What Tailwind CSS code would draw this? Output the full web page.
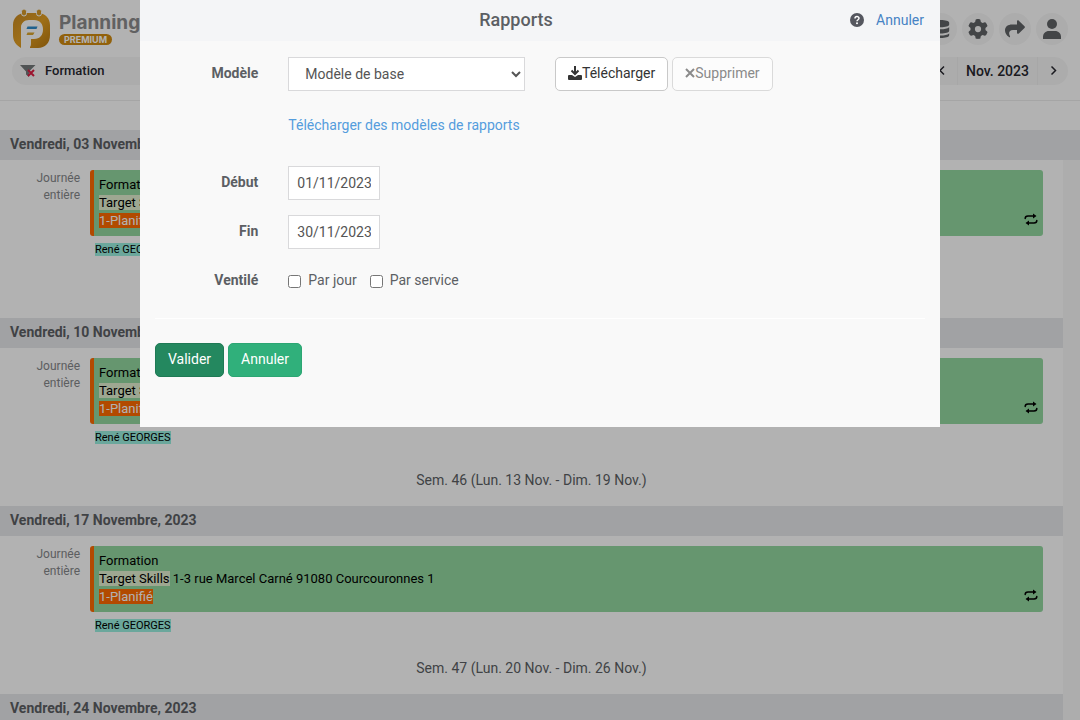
<!DOCTYPE html>
<html lang="fr">
<head>
<meta charset="utf-8">
<meta name="viewport" content="width=device-width, initial-scale=1">
<title>Planning – Rapports</title>
<script src="https://cdn.jsdelivr.net/npm/@tailwindcss/browser@4"></script>
</head>
<body class="h-screen overflow-hidden bg-white font-[Roboto,'Liberation_Sans',sans-serif] text-sm text-[#5c5f64]">

<svg class="hidden" aria-hidden="true">
  <symbol id="repeat" viewBox="0 0 14 13">
    <path d="M1.200 5.500C1.200 3.500 2.500 3 4 3h6M12.800 7.500c0 2-1.300 2.500-2.800 2.500H4" fill="none" stroke="currentColor" stroke-width="1.500" stroke-linecap="round"/>
    <path d="M9 .5L12.500 3 9 5.500zM5 7.500L1.500 10 5 12.500z" fill="currentColor"/>
  </symbol>
</svg>

<div class="flex h-full flex-col">
  <header class="h-[101px] shrink-0 border-b border-[#ececec] pl-3 pr-3">
    <div class="flex h-[57px] items-center justify-between">
      <div class="flex items-center gap-2">
        <svg class="h-10 w-[39px]" viewBox="0 0 39 40" role="img" aria-label="Logo Planning">
          <defs><linearGradient id="gold" x1="0" y1="0" x2="1" y2="1"><stop offset="0" stop-color="#c98a22"/><stop offset=".5" stop-color="#e3a024"/><stop offset="1" stop-color="#b97a10"/></linearGradient></defs>
          <path d="M9 39C4 36 1 32 1 26V16C1 9 6 4 13 4h13c7 0 12 5 12 12v10c0 8-5 13-12 13h-8V29h5c6 0 7-4 7-8 0-5-3-8-8-8H15c-4 0-6 2-6 6z" fill="url(#gold)"/>
          <path d="M9 39V20c0-6 3-9 8-9h5c6 0 9 4 9 9.500S28 30 22 30h-3v5c0 3-2 4-4 4z" fill="#fff"/>
          <rect x="9.500" y="0" width="5" height="7" rx="2.500" fill="#d69a2a" stroke="#fff"/><rect x="24.500" y="0" width="5" height="7" rx="2.500" fill="#d69a2a" stroke="#fff"/>
          <path d="M15.500 17.500h10l-1 2.500H14.500z" fill="#2d8ccc"/><path d="M15.500 23.500h7L21 26h-6.500z" fill="#dca52d"/>
        </svg>
        <div class="flex flex-col items-start">
          <span class="font-[Inter,sans-serif] text-[19px] leading-[22px] font-bold text-[#8b8b8d]">Planning</span>
          <span class="rounded-full bg-[#d28c10] px-[5px] font-[Inter,sans-serif] text-[9px] leading-[11px] font-bold text-white">PREMIUM</span>
        </div>
      </div>
      <nav class="flex gap-[5px] text-[#606366]" aria-label="Outils">
        <button class="flex size-8 items-center justify-center rounded-full bg-[#f7f7f7]" aria-label="Données">
          <svg class="size-5" viewBox="0 0 22 22" fill="currentColor"><path d="M2 4c0-4 18-4 18 0v2c0 4-18 4-18 0zM2 9c4 3 14 3 18 0v4c0 4-18 4-18 0zM2 16c4 3 14 3 18 0v2c0 4-18 4-18 0z"/></svg>
        </button>
        <button class="flex size-8 items-center justify-center rounded-full bg-[#f7f7f7]" aria-label="Paramètres">
          <svg class="size-5" viewBox="0 0 512 512" fill="currentColor"><path d="M495.900 166.600c3.200 8.700.5 18.400-6.400 24.600l-43.300 39.400c1.100 8.300 1.700 16.800 1.700 25.400s-.6 17.100-1.700 25.400l43.300 39.400c6.900 6.200 9.600 15.900 6.400 24.600-4.400 11.900-9.700 23.300-15.800 34.300l-4.700 8.100c-6.600 11-14 21.400-22.100 31.200-5.900 7.200-15.700 9.600-24.500 6.800l-55.700-17.700c-13.400 10.300-28.200 18.900-44 25.400l-12.500 57.100c-2 9.100-9 16.300-18.200 17.800-13.800 2.300-28 3.500-42.500 3.500s-28.700-1.200-42.500-3.500c-9.200-1.500-16.200-8.700-18.200-17.800l-12.500-57.100c-15.800-6.500-30.600-15.100-44-25.400L83.100 425.900c-8.800 2.800-18.600.3-24.500-6.800-8.100-9.800-15.500-20.200-22.100-31.200l-4.700-8.100c-6.100-11-11.400-22.400-15.800-34.300-3.200-8.700-.5-18.400 6.400-24.600l43.300-39.400C64.600 273.100 64 264.600 64 256s.6-17.100 1.700-25.400L22.400 191.200c-6.900-6.200-9.600-15.900-6.400-24.600 4.400-11.900 9.700-23.300 15.800-34.300l4.700-8.100c6.600-11 14-21.400 22.100-31.200 5.900-7.200 15.700-9.600 24.500-6.800l55.700 17.700c13.400-10.300 28.200-18.900 44-25.400l12.500-57.100c2-9.100 9-16.300 18.200-17.800C227.300 1.200 241.500 0 256 0s28.700 1.200 42.500 3.500c9.200 1.500 16.200 8.700 18.200 17.800l12.500 57.100c15.800 6.500 30.600 15.100 44 25.400l55.700-17.700c8.800-2.800 18.600-.3 24.500 6.800 8.100 9.800 15.500 20.200 22.100 31.200l4.700 8.100c6.100 11 11.400 22.400 15.700 34.400zM256 336a80 80 0 1 0 0-160 80 80 0 1 0 0 160z"/></svg>
        </button>
        <button class="flex size-8 items-center justify-center rounded-full bg-[#f7f7f7]" aria-label="Partager">
          <svg class="size-5" viewBox="0 0 20 20" fill="currentColor"><path d="M12 2.500c0-1 1-1.500 1.800-.8l5.700 5.500c.6.500.6 1.300 0 1.800l-5.700 5.500c-.8.700-1.800.2-1.800-.8V11H8c-4 0-4.700 3-3 6.300.3.800-.4 1.300-1 .8C1.500 16.300 0 14 0 11.500 0 7.500 3 5.500 7 5.500h5z"/></svg>
        </button>
        <button class="flex size-8 items-center justify-center rounded-full bg-[#f7f7f7]" aria-label="Profil">
          <svg class="size-5" viewBox="0 0 20 20" fill="currentColor"><circle cx="10" cy="5" r="5"/><path d="M1 20v-2c0-3.500 2.500-6 6-6h6c3.500 0 6 2.500 6 6v2z"/></svg>
        </button>
      </nav>
    </div>
    <div class="flex h-7 justify-between text-[#27272f]">
      <button class="flex w-72 items-center gap-2 rounded-full bg-[#f7f7f7] pl-2 text-[13px] font-medium">
        <svg class="h-4 w-[17px]" viewBox="0 0 17 16"><path d="M0 2h15.500L9 8.500V14l-3-2.500v-3z" fill="#74797a"/><path d="M8 7l6 6M14 7l-6 6" stroke="#df1d43" stroke-width="2"/></svg>
        Formation
      </button>
      <div class="flex items-stretch rounded-full bg-[#f7f7f7]">
        <button class="flex w-8 items-center justify-center" aria-label="Mois précédent"><svg class="size-3" viewBox="0 0 12 12" fill="none" stroke="currentColor" stroke-width="1.500"><path d="M9 1.500L5 5.500l4 4"/></svg></button>
        <button class="border-x border-[#efefef] px-2 text-sm font-medium">Nov. 2023</button>
        <button class="flex w-[30px] items-center justify-center" aria-label="Mois suivant"><svg class="size-3" viewBox="0 0 12 12" fill="none" stroke="currentColor" stroke-width="1.500"><path d="M4.500 1.500l4 4-4 4"/></svg></button>
      </div>
    </div>
  </header>

  <main class="mt-[29px] flex min-h-0 flex-1 flex-col">
    <h2 class="h-[30px] shrink-0 bg-[#e7e8eb] px-[10px] leading-7 font-bold">Vendredi, 03 Novembre, 2023</h2>
    <div class="flex min-h-0 flex-1">
      <div class="min-w-0 flex-1 overflow-hidden">
        <section class="h-[158px] pt-[10px]">
          <div class="flex pr-5">
            <div class="w-20 text-right text-xs leading-[17px] text-[#85878a]">Journée<br>entière</div>
            <div class="ml-[10px] min-w-0 flex-1">
              <article class="flex h-[66px] items-end justify-between rounded-[3px] border-l-4 border-[#ff6a00] bg-[#92d79f] pr-[5px] pb-[6px] pl-[5px] text-[13px] leading-[18px] text-black">
                <div><p>Formation</p><p><span class="bg-[#e2f0d0]">Target Skills</span> 1-3 rue Marcel Carné 91080 Courcouronnes 1</p><p><span class="bg-[#ff6a00] text-white">1-Planifié</span></p></div>
                <svg class="mb-1 h-[13px] w-[14px]"><use href="#repeat"/></svg>
              </article>
              <p class="mt-[5px] pl-[5px] text-[11px] leading-[18px] text-black"><span class="bg-[#9af0e0]">René GEORGES</span></p>
            </div>
          </div>
        </section>
        <h2 class="h-[30px] bg-[#e7e8eb] px-[10px] leading-7 font-bold">Vendredi, 10 Novembre, 2023</h2>
        <section class="h-[158px] pt-[10px]">
          <div class="flex pr-5">
            <div class="w-20 text-right text-xs leading-[17px] text-[#85878a]">Journée<br>entière</div>
            <div class="ml-[10px] min-w-0 flex-1">
              <article class="flex h-[66px] items-end justify-between rounded-[3px] border-l-4 border-[#ff6a00] bg-[#92d79f] pr-[5px] pb-[6px] pl-[5px] text-[13px] leading-[18px] text-black">
                <div><p>Formation</p><p><span class="bg-[#e2f0d0]">Target Skills</span> 1-3 rue Marcel Carné 91080 Courcouronnes 1</p><p><span class="bg-[#ff6a00] text-white">1-Planifié</span></p></div>
                <svg class="mb-1 h-[13px] w-[14px]"><use href="#repeat"/></svg>
              </article>
              <p class="mt-[5px] pl-[5px] text-[11px] leading-[18px] text-black"><span class="bg-[#9af0e0]">René GEORGES</span></p>
            </div>
          </div>
          <p class="mt-6 text-center leading-[18px]">Sem. 46 (Lun. 13 Nov. - Dim. 19 Nov.)</p>
        </section>
        <h2 class="h-[30px] bg-[#e7e8eb] px-[10px] leading-7 font-bold">Vendredi, 17 Novembre, 2023</h2>
        <section class="h-[158px] pt-[10px]">
          <div class="flex pr-5">
            <div class="w-20 text-right text-xs leading-[17px] text-[#85878a]">Journée<br>entière</div>
            <div class="ml-[10px] min-w-0 flex-1">
              <article class="flex h-[66px] items-end justify-between rounded-[3px] border-l-4 border-[#ff6a00] bg-[#92d79f] pr-[5px] pb-[6px] pl-[5px] text-[13px] leading-[18px] text-black">
                <div><p>Formation</p><p><span class="bg-[#e2f0d0]">Target Skills</span> 1-3 rue Marcel Carné 91080 Courcouronnes 1</p><p><span class="bg-[#ff6a00] text-white">1-Planifié</span></p></div>
                <svg class="mb-1 h-[13px] w-[14px]"><use href="#repeat"/></svg>
              </article>
              <p class="mt-[5px] pl-[5px] text-[11px] leading-[18px] text-black"><span class="bg-[#9af0e0]">René GEORGES</span></p>
            </div>
          </div>
          <p class="mt-6 text-center leading-[18px]">Sem. 47 (Lun. 20 Nov. - Dim. 26 Nov.)</p>
        </section>
        <h2 class="h-[30px] bg-[#e7e8eb] px-[10px] leading-7 font-bold">Vendredi, 24 Novembre, 2023</h2>
      </div>
      <div class="w-[17px] shrink-0 bg-[#f8f8f8]"></div>
    </div>
  </main>
</div>

<div class="fixed inset-0 bg-black/30">
  <div role="dialog" aria-modal="true" aria-labelledby="dialog-title" class="mx-auto w-full max-w-[800px] bg-[#f9f9f9] pb-[50px]">
    <div class="grid h-[41px] grid-cols-[1fr_auto_1fr] items-center bg-[#f4f5f7] px-4 pb-[2px]">
      <span></span>
      <h1 id="dialog-title" class="pr-12 text-lg leading-6 font-medium">Rapports</h1>
      <div class="flex items-center justify-end gap-3">
        <button aria-label="Aide"><svg class="size-[14px]" viewBox="0 0 14 14"><circle cx="7" cy="7" r="7" fill="#55575f"/><path d="M5 5.400C5 3 9 3 9 5.300 9 6.800 7 6.700 7 8.300" fill="none" stroke="#fff" stroke-width="1.500"/><circle cx="7" cy="10.300" r="1" fill="#fff"/></svg></button>
        <a href="#" class="text-[#4683c4]">Annuler</a>
      </div>
    </div>
    <form class="pt-4">
      <div class="grid grid-cols-12">
        <label for="modele" class="col-span-2 px-[15px] text-right leading-8 font-bold">Modèle</label>
        <div class="col-span-4 px-[15px]">
          <select id="modele" class="h-[34px] w-full border border-[#d9d9db] bg-white px-3 text-[#555]"><option>Modèle de base</option></select>
        </div>
        <div class="col-span-6 flex gap-1 px-[15px]">
          <button type="button" class="flex h-[34px] items-center rounded-[5px] border border-[#c9c9c9] bg-white px-3 pb-[2px] text-[#333]"><svg class="size-[14px]" viewBox="0 0 14 14"><path d="M7 0v7M3.500 4.500L7 8l3.500-3.500" fill="none" stroke="currentColor" stroke-width="2"/><path d="M1 9h3l3 2 3-2h3q1 0 1 1v3q0 1-1 1H1q-1 0-1-1v-3q0-1 1-1z" fill="currentColor"/></svg>Télécharger</button>
          <button type="button" disabled class="flex h-[34px] items-center rounded-[5px] border border-[#dadada] bg-[#fcfcfc] px-3 pb-[2px] text-[#8a8a8a]"><svg class="size-[10px]" viewBox="0 0 10 10" fill="none" stroke="currentColor" stroke-width="2"><path d="M1 1l8 8M9 1L1 9"/></svg>Supprimer</button>
        </div>
      </div>
      <div class="grid grid-cols-12 py-[25px]">
        <div class="col-span-10 col-start-3 px-[15px] leading-[18px]"><a href="#" class="text-[#559ddd]">Télécharger des modèles de rapports</a></div>
      </div>
      <div class="mt-[7px] grid grid-cols-12">
        <label for="debut" class="col-span-2 px-[15px] text-right leading-8 font-bold">Début</label>
        <div class="col-span-4 px-[15px]"><input id="debut" type="text" value="01/11/2023" class="h-[34px] w-[92px] border border-[#d9d9db] bg-white px-2 text-[#555]"></div>
      </div>
      <div class="mt-[15px] grid grid-cols-12">
        <label for="fin" class="col-span-2 px-[15px] text-right leading-8 font-bold">Fin</label>
        <div class="col-span-4 px-[15px]"><input id="fin" type="text" value="30/11/2023" class="h-[34px] w-[92px] border border-[#d9d9db] bg-white px-2 text-[#555]"></div>
      </div>
      <fieldset class="mt-[15px] grid grid-cols-12" aria-labelledby="ventile">
        <span id="ventile" class="col-span-2 px-[15px] text-right leading-8 font-bold">Ventilé</span>
        <div class="col-span-10 flex gap-[13px] px-[15px] leading-8">
          <label class="flex items-center gap-[7px]"><input type="checkbox" class="mt-[2px] size-[13px]">Par jour</label>
          <label class="flex items-center gap-[7px]"><input type="checkbox" class="mt-[2px] size-[13px]">Par service</label>
        </div>
      </fieldset>
      <hr class="mx-[15px] mt-[22px] border-white">
      <div class="mt-6 flex gap-1 px-[15px]">
        <button type="submit" class="h-[34px] rounded-[5px] border border-[#1f7a55] bg-[#24885f] px-3 pb-[2px] text-white">Valider</button>
        <button type="button" class="h-[34px] rounded-[5px] border border-[#2ca673] bg-[#30b07b] px-3 pb-[2px] text-white">Annuler</button>
      </div>
    </form>
  </div>
</div>
</body>
</html>
